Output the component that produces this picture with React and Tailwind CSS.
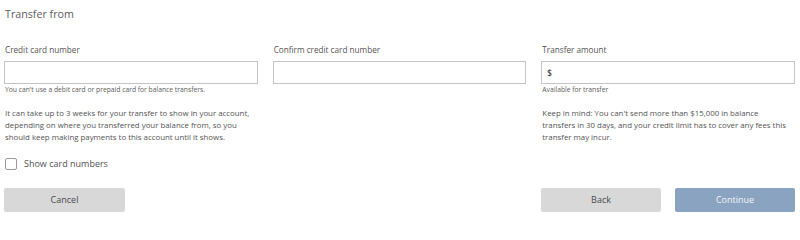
export default function App() {
  return (
    <div
      className="w-[800px] h-[220px] bg-white pl-1 pr-[5px] pt-[5px] text-[#545454]"
      style={{ fontFamily: '"Open Sans", "Liberation Sans", sans-serif' }}
    >
      <h2 className="pl-px text-[10.7px] leading-[18px] text-[#5c5c5c]">Transfer from</h2>

      <div className="mt-[20px] grid grid-cols-3 gap-x-[15px]">
        {/* Credit card */}
        <div>
          <label className="block pl-px text-[8.2px] leading-[14px]">Credit card number</label>
          <div className="mt-[4px] h-[23px] border border-[#c4c4c4] bg-white" />
          <p className="mt-[1px] pl-px text-[6.75px] leading-[10px] text-[#5c5c5c]">
            You can't use a debit card or prepaid card for balance transfers.
          </p>
          <p className="mt-[12px] pl-px text-[7.85px] leading-[12px]">
            It can take up to 3 weeks for your transfer to show in your account, depending on where you
            transferred your balance from, so you should keep making payments to this account until it shows.
          </p>
        </div>

        {/* Confirm */}
        <div>
          <label className="block pl-px text-[8.2px] leading-[14px]">Confirm credit card number</label>
          <div className="mt-[4px] h-[23px] border border-[#c4c4c4] bg-white" />
        </div>

        {/* Amount */}
        <div>
          <label className="block pl-px text-[8.2px] leading-[14px]">Transfer amount</label>
          <div className="mt-[4px] flex h-[23px] items-center border border-[#c4c4c4] bg-white px-[5px] text-[8px] font-semibold text-[#444]">
            $
          </div>
          <p className="mt-[1px] pl-px text-[6.75px] leading-[10px] text-[#5c5c5c]">Available for transfer</p>
          <p className="mt-[12px] pl-px pr-[5px] text-[7.85px] leading-[12px]">
            Keep in mind: You can't send more than $15,000 in balance transfers in 30 days, and your credit
            limit has to cover any fees this transfer may incur.
          </p>
        </div>
      </div>

      <label className="mt-[14px] flex items-center gap-[7px] pl-px">
        <span className="h-[12px] w-[12px] rounded-[2px] border border-[#9a9a9a] bg-white" />
        <span className="text-[9px] leading-[14px]">Show card numbers</span>
      </label>

      <div className="mt-[17px] flex items-center">
        <button className="h-[24px] w-[121px] rounded-[2px] bg-[#d8d8d8] text-[9px] text-[#4a4a4a]">Cancel</button>
        <div className="flex-1" />
        <button className="h-[24px] w-[120px] rounded-[2px] bg-[#d8d8d8] text-[9px] text-[#4a4a4a]">Back</button>
        <button className="ml-[14px] h-[24px] w-[120px] rounded-[2px] bg-[#89a3c1] text-[9px] text-[#f4f7fa]">
          Continue
        </button>
      </div>
    </div>
  );
}
